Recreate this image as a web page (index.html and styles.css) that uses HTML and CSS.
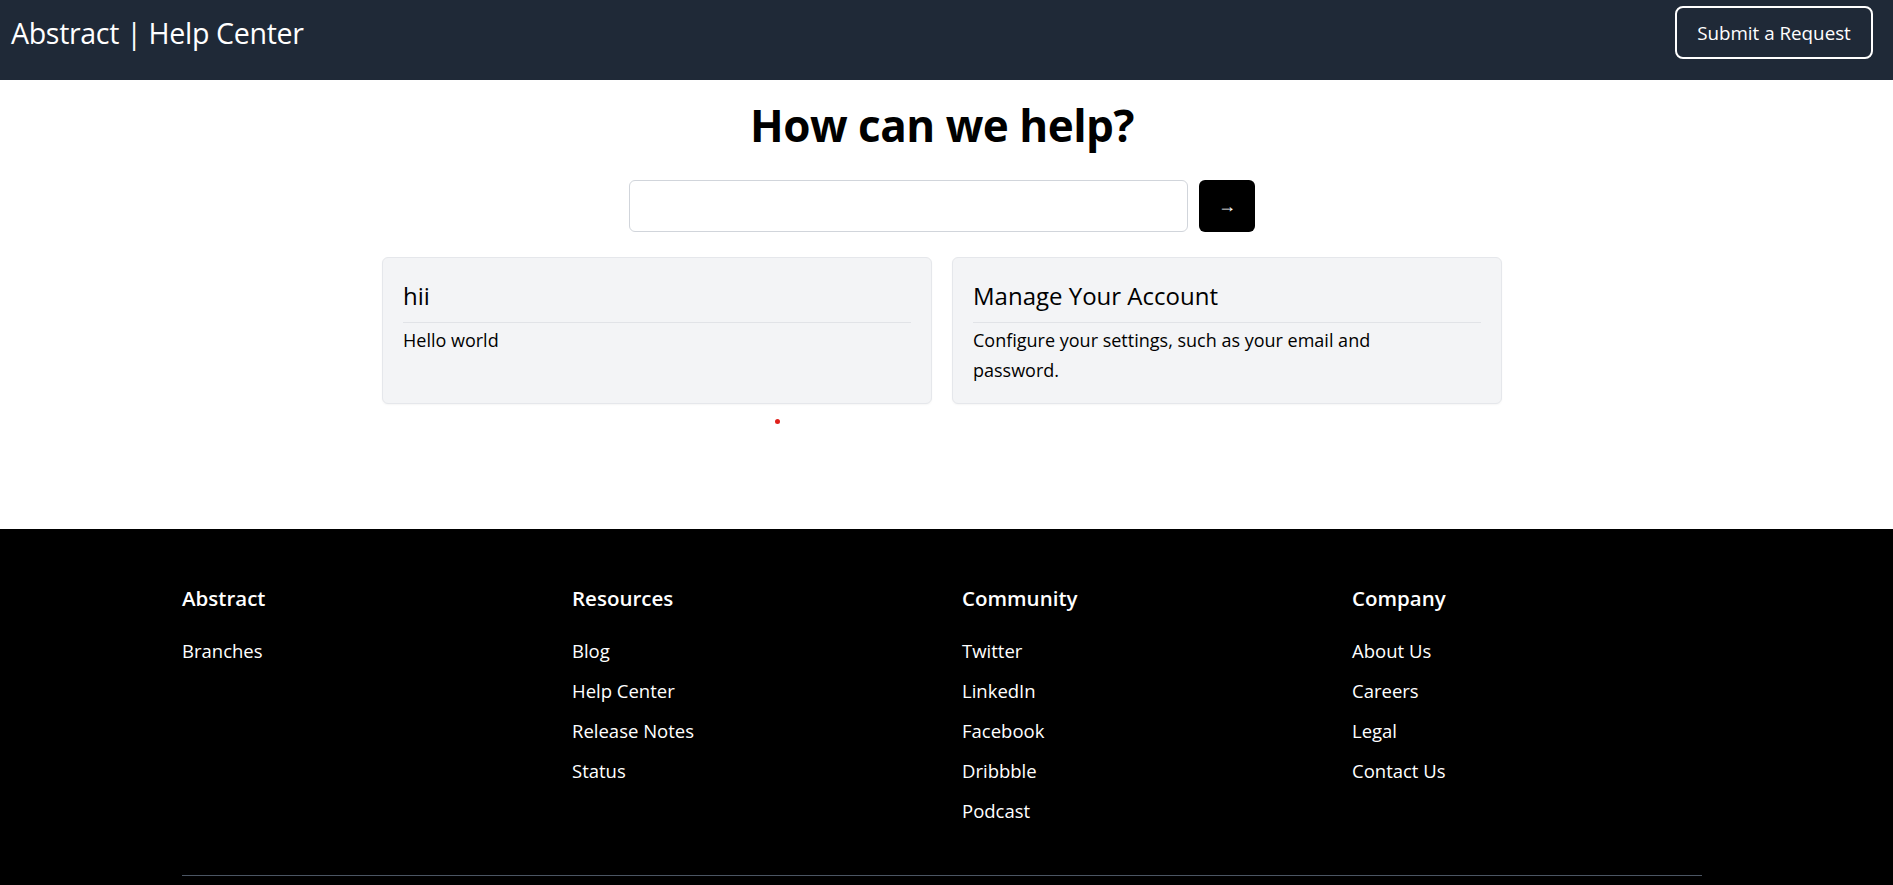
FILE: index.html
```html
<!DOCTYPE html>
<html lang="en">
<head>
<meta charset="utf-8">
<title>Abstract | Help Center</title>
<link rel="stylesheet" href="styles.css">
</head>
<body>
<header class="topbar">
  <div class="brand">Abstract | Help Center</div>
  <a class="btn-submit" href="#">Submit a Request</a>
</header>
<main class="hero">
  <h1 class="hero-title">How can we help?</h1>
  <form class="search">
    <input class="search-input" type="text" aria-label="Search">
    <button class="search-btn" type="button">&rarr;</button>
  </form>
  <div class="cards">
    <div class="card">
      <h2 class="card-title">hii</h2>
      <p class="card-text">Hello world</p>
    </div>
    <div class="card">
      <h2 class="card-title card-title-strong">Manage Your Account</h2>
      <p class="card-text">Configure your settings, such as your email and password.</p>
    </div>
  </div>
  <div class="cards-foot"><span class="dot"></span></div>
</main>
<footer class="footer">
  <div class="footer-inner">
    <div class="footer-cols">
      <div class="fcol">
        <h3 class="fhead">Abstract</h3>
        <ul class="flinks">
          <li><a href="#">Branches</a></li>
        </ul>
      </div>
      <div class="fcol">
        <h3 class="fhead">Resources</h3>
        <ul class="flinks">
          <li><a href="#">Blog</a></li>
          <li><a href="#">Help Center</a></li>
          <li><a href="#">Release Notes</a></li>
          <li><a href="#">Status</a></li>
        </ul>
      </div>
      <div class="fcol">
        <h3 class="fhead">Community</h3>
        <ul class="flinks">
          <li><a href="#">Twitter</a></li>
          <li><a href="#">LinkedIn</a></li>
          <li><a href="#">Facebook</a></li>
          <li><a href="#">Dribbble</a></li>
          <li><a href="#">Podcast</a></li>
        </ul>
      </div>
      <div class="fcol">
        <h3 class="fhead">Company</h3>
        <ul class="flinks">
          <li><a href="#">About Us</a></li>
          <li><a href="#">Careers</a></li>
          <li><a href="#">Legal</a></li>
          <li><a href="#">Contact Us</a></li>
        </ul>
      </div>
    </div>
    <div class="footer-rule"></div>
  </div>
</footer>
</body>
</html>
```

FILE: styles.css
```css
* { box-sizing: border-box; }
html, body { margin: 0; padding: 0; }
body {
  font-family: "Open Sans", "Noto Sans", sans-serif;
  color: #000;
  background: #fff;
}
a { color: inherit; text-decoration: none; }

.topbar {
  height: 80px;
  background: #1f2937;
  display: flex;
  justify-content: space-between;
  align-items: flex-start;
  padding: 0 20px 0 11px;
}
.brand {
  color: #fff;
  font-size: 28.6px;
  font-weight: 400;
  line-height: 40px;
  margin-top: 13px;
  letter-spacing: -0.35px;
}
.btn-submit {
  margin-top: 6px;
  height: 53px;
  width: 198px;
  border: 2px solid #fff;
  border-radius: 8px;
  color: #fff;
  font-size: 18.8px;
  display: flex;
  align-items: center;
  justify-content: center;
}

.hero {
  padding: 17px 9px 105px 0;
}
.hero-title {
  margin: 0;
  text-align: center;
  font-size: 44px;
  line-height: 56px;
  font-weight: 700;
  letter-spacing: -0.5px;
}
.search {
  margin: 27px 0 0;
  display: flex;
  justify-content: center;
  gap: 11px;
}
.search-input {
  width: 559px;
  height: 52px;
  border: 1px solid #d1d5db;
  border-radius: 6px;
  padding: 0 12px;
  font: inherit;
}
.search-btn {
  width: 56px;
  height: 52px;
  border: 0;
  border-radius: 6px;
  background: #000;
  color: #fff;
  font-size: 18px;
  font-family: "Liberation Sans", "DejaVu Sans", sans-serif;
}
.cards {
  width: 1120px;
  margin: 25px auto 0;
  display: grid;
  grid-template-columns: 1fr 1fr;
  gap: 20px;
}
.card {
  background: #f3f4f6;
  border: 1px solid #e5e7eb;
  border-radius: 6px;
  padding: 22px 20px 18px;
  box-shadow: 0 1px 2px rgba(0,0,0,0.04);
}
.card-title {
  margin: 0;
  font-size: 24px;
  line-height: 32px;
  font-weight: 400;
  padding-bottom: 10px;
  border-bottom: 1px solid #e1e3e7;
}
.card-title-strong { font-weight: 500; }
.card-text {
  margin: 2px 0 0;
  font-size: 18px;
  line-height: 30px;
  max-width: 440px;
}
.cards-foot {
  width: 1120px;
  margin: 15px auto 0;
  height: 5px;
  display: flex;
}
.dot {
  margin-left: 393px;
  width: 5px;
  height: 5px;
  border-radius: 50%;
  background: #e0201b;
}

.footer {
  background: #000;
  color: #fff;
  padding: 55px 9px 0 0;
  min-height: 400px;
}
.footer-inner {
  width: 1520px;
  margin: 0 auto;
}
.footer-cols {
  display: grid;
  grid-template-columns: repeat(4, 1fr);
  gap: 40px;
}
.fhead {
  margin: 0;
  font-size: 20.5px;
  line-height: 28px;
  font-weight: 600;
}
.flinks {
  list-style: none;
  margin: 25px 0 0;
  padding: 0;
  display: flex;
  flex-direction: column;
  gap: 12px;
}
.flinks li {
  font-size: 18.5px;
  line-height: 28px;
}
.footer-rule {
  margin-top: 50px;
  height: 1px;
  background: #4b5563;
}
```
